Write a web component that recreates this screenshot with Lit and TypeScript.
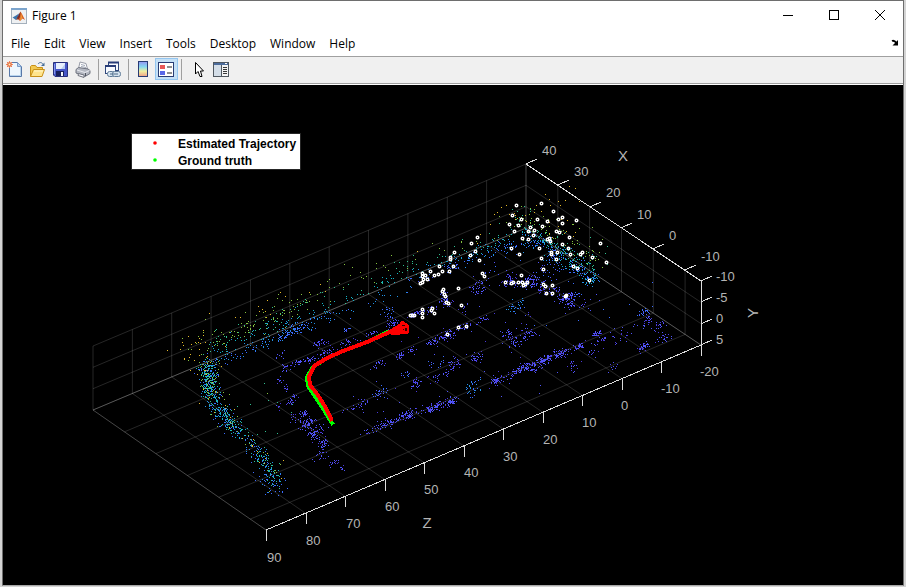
import { LitElement, html, svg, css } from "lit";
import { customElement } from "lit/decorators.js";

type Pt = [number, number];

/* Colour ramp of the point cloud, low to high elevation */
const RAMP = ["#4a38d8", "#5054f8", "#3b6dff", "#2292e6", "#14b4c8", "#30c090", "#86c440", "#e6bb2a"];

/* Seeded generator, so the cloud is the same on every load */
function randomSource(seed: number) {
  let s = seed;
  return () => {
    s = (s + 0x6d2b79f5) | 0;
    let t = Math.imul(s ^ (s >>> 15), 1 | s);
    t = (t + Math.imul(t ^ (t >>> 7), 61 | t)) ^ t;
    return ((t ^ (t >>> 14)) >>> 0) / 4294967296;
  };
}

/* [x, y, count, spread x, spread y, ramp indices] */
type Cluster = [number, number, number, number, number, number[]];
const LOW = [0, 1, 1];
const MID = [1, 2, 2];
const SKY = [2, 3];
const CLUSTERS: Cluster[] = [
  [508, 280, 45, 6, 4, LOW], [524, 282, 60, 7, 4, LOW], [534, 283, 16, 4, 4, LOW], [542, 287, 36, 3, 4, LOW],
  [553, 291, 20, 5, 3, LOW], [566, 297, 70, 6, 3, LOW], [570, 304, 30, 3, 3, LOW], [576, 294, 10, 4, 2, MID],
  [479, 287, 42, 6, 5, LOW], [517, 305, 34, 7, 4, SKY], [508, 333, 26, 5, 4, LOW], [529, 334, 36, 6, 4, LOW],
  [514, 343, 32, 4, 5, LOW], [597, 333, 34, 3, 2, LOW], [602, 338, 16, 5, 3, LOW], [527, 315, 5, 9, 5, LOW],
  [325, 352, 26, 5, 3, LOW], [320, 343, 22, 5, 3, LOW], [388, 312, 22, 5, 4, MID], [393, 323, 34, 4, 3, LOW],
  [371, 333, 16, 4, 2, LOW], [346, 343, 26, 9, 3, LOW], [307, 360, 14, 5, 2, LOW], [400, 355, 24, 3, 2, LOW],
  [410, 350, 16, 4, 3, LOW], [378, 363, 24, 5, 3, LOW], [432, 342, 28, 4, 2, LOW], [446, 335, 50, 6, 4, LOW],
  [463, 326, 28, 5, 2, LOW], [483, 318, 14, 5, 3, LOW], [477, 357, 32, 5, 4, LOW], [453, 363, 30, 5, 5, LOW],
  [447, 372, 20, 5, 3, LOW], [434, 377, 14, 5, 3, LOW], [435, 362, 14, 8, 5, MID], [415, 383, 30, 3, 4, LOW],
  [405, 375, 10, 5, 3, MID], [380, 392, 26, 5, 4, MID], [360, 404, 18, 7, 3, LOW], [473, 387, 34, 5, 5, SKY],
  [497, 380, 50, 5, 3, LOW], [514, 372, 28, 5, 3, LOW], [526, 366, 70, 7, 3, LOW], [545, 359, 80, 5, 3, LOW],
  [561, 353, 60, 5, 3, LOW], [536, 368, 22, 5, 3, LOW], [573, 365, 16, 4, 5, LOW], [580, 345, 30, 4, 2, LOW],
  [593, 350, 16, 4, 5, LOW], [612, 367, 9, 4, 3, LOW], [617, 337, 10, 7, 5, LOW], [643, 312, 24, 5, 3, MID],
  [648, 320, 22, 4, 3, LOW], [658, 326, 24, 4, 3, LOW], [665, 337, 14, 4, 3, LOW], [643, 346, 36, 4, 3, LOW],
  [660, 340, 8, 6, 3, LOW], [630, 328, 10, 8, 5, LOW], [450, 401, 50, 5, 3, LOW], [433, 407, 80, 7, 3, LOW],
  [407, 415, 80, 7, 3, LOW], [385, 424, 50, 8, 3, LOW], [369, 431, 14, 5, 2, LOW], [350, 409, 9, 4, 4, LOW],
  [303, 413, 28, 3, 2, LOW], [307, 423, 60, 5, 4, LOW], [315, 433, 66, 5, 4, LOW], [323, 442, 40, 4, 4, LOW],
  [320, 456, 18, 6, 4, LOW], [334, 462, 14, 4, 3, LOW], [343, 468, 7, 2, 3, LOW], [290, 402, 12, 4, 2, LOW],
  [278, 356, 9, 4, 3, LOW], [284, 367, 16, 4, 3, LOW], [297, 362, 22, 5, 2, LOW], [310, 359, 14, 5, 2, LOW],
  [280, 380, 9, 3, 3, LOW], [285, 387, 9, 3, 3, LOW], [293, 398, 14, 3, 3, LOW], [280, 405, 7, 4, 4, LOW],
  [292, 418, 12, 4, 4, LOW], [317, 343, 8, 2, 2, LOW], [297, 327, 28, 5, 4, [2]], [283, 335, 18, 6, 3, [2]],
  [345, 330, 11, 3, 2, MID], [415, 313, 24, 6, 2, LOW], [430, 309, 16, 6, 3, LOW], [443, 296, 22, 3, 6, LOW],
  [447, 303, 22, 4, 3, LOW], [462, 310, 12, 6, 5, LOW], [452, 267, 22, 5, 4, MID], [425, 277, 12, 6, 4, MID],
  [470, 258, 20, 4, 4, [2, 2, 3]], [494, 249, 22, 8, 4, [2, 3]], [510, 247, 26, 9, 4, [2, 3]],
  [532, 244, 30, 10, 5, [2, 3]], [555, 256, 40, 8, 7, [2, 2, 3]], [575, 268, 36, 7, 7, [2, 2, 3]],
  [545, 272, 44, 14, 8, [1, 2]], [590, 280, 34, 5, 5, [2, 3, 4]], [500, 265, 18, 14, 8, [1, 2]],
  [602, 350, 12, 30, 10, LOW], [560, 320, 10, 50, 12, MID], [470, 340, 16, 50, 20, LOW],
  [420, 390, 18, 50, 16, LOW], [530, 370, 10, 40, 14, LOW], [590, 302, 12, 8, 6, LOW],
  [210, 375, 50, 7, 14, [5, 6, 6, 7]], [190, 350, 22, 18, 18, [6, 7, 7]], [275, 410, 9, 20, 30, [5, 6]],
  [560, 205, 12, 18, 16, [7]], [535, 215, 14, 15, 16, [7, 7, 6]], [575, 230, 14, 14, 14, [7, 6]],
];

/* Walls: path, count, offset y, spread x, spread y, ramp indices */
type Band = [Pt[], number, number, number, number, number[]];
const CURVE: Pt[] = [[206, 362], [208, 378], [211, 392], [218, 408], [230, 424], [246, 438], [260, 453], [271, 470], [275, 486]];
const BANDS: Band[] = [
  [CURVE, 230, 2, 8, 5, [2, 2, 3]],
  [CURVE, 200, 0, 6, 5, [4, 4, 5, 3]],
  [CURVE, 80, -3, 8, 7, [6, 5]],
  [CURVE, 26, -2, 9, 6, [7]],
  [[[206, 365], [210, 395]], 110, 0, 5, 6, [2, 3, 4, 5]],
  [[[214, 405], [240, 432]], 70, 0, 6, 4, [2, 3, 4]],
  [[[264, 478], [280, 494]], 24, 0, 8, 4, [2]],
  [[[203, 364], [300, 325]], 80, 4, 4, 4, [2, 2, 3]],
  [[[260, 342], [330, 312]], 70, 2, 5, 4, [2, 3]],
  [[[205, 355], [300, 318]], 90, -2, 4, 7, [4, 5, 3]],
  [[[205, 350], [310, 305]], 95, -4, 5, 7, [5, 6, 6]],
  [[[180, 350], [300, 295]], 34, -2, 8, 10, [7, 6]],
  [[[300, 325], [420, 276]], 40, 5, 4, 4, [2, 3]],
  [[[300, 320], [420, 270]], 44, -2, 4, 4, [4, 4, 5]],
  [[[300, 308], [420, 258]], 32, -4, 5, 5, [5, 6]],
  [[[300, 290], [460, 235]], 14, 0, 6, 8, [6, 7]],
  [[[410, 275], [526, 230]], 60, 0, 4, 4, [3, 4, 4]],
  [[[400, 280], [526, 230]], 40, -9, 5, 6, [5, 6, 5]],
  [[[460, 245], [526, 215]], 14, -10, 6, 8, [7, 6]],
  [[[522, 226], [595, 276]], 130, 4, 5, 5, [3, 4, 2]],
  [[[522, 226], [590, 270]], 110, -3, 6, 6, [4, 5, 5]],
  [[[515, 215], [605, 262]], 80, -3, 7, 8, [6, 5, 6]],
];

function buildCloud(): string[] {
  const rnd = randomSource(90210);
  const bell = () => (rnd() + rnd() + rnd() - 1.5) * 1.5;
  const paths = RAMP.map(() => "");
  const dot = (x: number, y: number, ramp: number[]) => {
    const c = ramp[Math.floor(rnd() * ramp.length)];
    paths[c] += `M${Math.round(x)} ${Math.round(y)}h1v1h-1z`;
  };
  for (const [x, y, n, sx, sy, ramp] of CLUSTERS) {
    for (let i = 0; i < n; i++) {
      const u = bell() * sx;
      dot(x + u, y + bell() * sy - u * 0.3, ramp);
    }
  }
  for (const [pts, n, dy, sx, sy, ramp] of BANDS) {
    for (let i = 0; i < n; i++) {
      const t = rnd() * (pts.length - 1);
      const k = Math.floor(t);
      const f = t - k;
      const [a, b] = [pts[k], pts[k + 1]];
      dot(a[0] + (b[0] - a[0]) * f + bell() * sx, a[1] + (b[1] - a[1]) * f + dy + bell() * sy, ramp);
    }
  }
  return paths;
}
const CLOUD = buildCloud();

/* Map points seen by the current key frame */
const TRACKED: Pt[] = [
  [516, 205], [541, 203], [553, 211], [512, 215], [521, 219], [537, 219], [509, 224], [547, 221], [558, 219],
  [562, 217], [562, 223], [576, 220], [542, 226], [518, 225], [514, 231], [530, 227], [528, 231], [534, 230],
  [533, 235], [522, 238], [528, 239], [556, 231], [559, 232], [569, 237], [547, 239], [550, 241], [549, 238],
  [562, 244], [568, 248], [511, 248], [519, 254], [539, 248], [541, 258], [551, 252], [551, 254], [557, 252],
  [556, 259], [570, 254], [582, 252], [580, 254], [592, 257], [600, 243], [606, 262], [543, 269], [573, 266],
  [577, 268], [589, 280], [477, 237], [471, 243], [475, 251], [470, 255], [479, 260], [454, 252], [450, 257],
  [450, 259], [453, 266], [439, 266], [449, 271], [442, 271], [430, 271], [422, 273], [422, 276], [425, 275],
  [427, 279], [423, 279], [420, 283], [422, 282], [434, 275], [438, 274], [482, 273], [484, 276], [458, 288],
  [443, 289], [442, 291], [444, 294], [445, 296], [446, 302], [448, 303], [461, 305], [521, 275], [505, 282],
  [511, 283], [513, 282], [518, 282], [522, 282], [523, 285], [527, 282], [525, 284], [543, 284], [545, 286],
  [552, 285], [546, 293], [552, 293], [566, 295], [565, 296], [432, 308], [431, 310], [434, 313], [422, 309],
  [422, 313], [422, 317], [410, 315], [412, 315], [414, 315], [458, 327], [466, 326], [447, 334],
];

/* Axes box: corner points, 10-unit steps and tick labels */
const FRONT: Pt = [266, 530];
const RIGHT: Pt = [701, 345];
const BACK: Pt = [526, 228];
const LEFT: Pt = [93, 410];
const WALL = 64;
const Z_TICKS = ["90", "80", "70", "60", "50", "40", "30", "20", "10", "0", "-10", "-20"];
const X_TICKS = ["40", "30", "20", "10", "0", "-10"];
const Y_TICKS = ["-10", "-5", "0", "5"];
const mix = (a: Pt, b: Pt, t: number): Pt => [a[0] + (b[0] - a[0]) * t, a[1] + (b[1] - a[1]) * t];

function gridPath(): string {
  let d = "";
  const seg = (a: Pt, b: Pt) => { d += `M${a[0].toFixed(1)} ${a[1].toFixed(1)}L${b[0].toFixed(1)} ${b[1].toFixed(1)}`; };
  const up = (p: Pt, h: number): Pt => [p[0], p[1] - h];
  Z_TICKS.forEach((_, i) => {
    const back = mix(LEFT, BACK, i / 11);
    seg(mix(FRONT, RIGHT, i / 11), back);
    seg(back, up(back, WALL));
  });
  X_TICKS.forEach((_, i) => {
    const side = mix(BACK, RIGHT, i / 5.5);
    seg(mix(LEFT, FRONT, i / 5.5), side);
    seg(side, up(side, WALL));
  });
  Y_TICKS.forEach((_, i) => {
    const h = (WALL * i) / 3;
    seg(up(LEFT, h), up(BACK, h));
    seg(up(BACK, h), up(RIGHT, h));
  });
  return d + `M${LEFT}L${FRONT}`;
}

function axisPath(): string {
  let d = `M${FRONT}L${RIGHT}V281L526 164`;
  Z_TICKS.forEach((_, i) => {
    const [x, y] = mix(FRONT, RIGHT, i / 11);
    d += `M${Math.round(x)} ${Math.round(y)}v11`;
  });
  X_TICKS.forEach((_, i) => {
    const [x, y] = mix([526, 164], [701, 281], i / 5.5);
    d += `M${Math.round(x)} ${Math.round(y)}l11 -5`;
  });
  Y_TICKS.forEach((_, i) => { d += `M701 ${281 + Math.round((64 * i) / 3)}l11 -5`; });
  return d;
}
const GRID = gridPath();
const AXES = axisPath();

@customElement("trajectory-plot")
export class TrajectoryPlot extends LitElement {
  static styles = css`
    :host { display: flex; flex: 1; min-height: 0; background: #000; }
    .plot { flex: 1; min-width: 0; width: 100%; height: 100%; font-family: "Liberation Sans", Arial, sans-serif; }
    .grid { fill: none; stroke: #fff; stroke-opacity: 0.15; }
    .edge { fill: none; stroke: #fff; stroke-opacity: 0.1; }
    .axes { fill: none; stroke: #dcdcdc; shape-rendering: crispEdges; }
    .dots { shape-rendering: crispEdges; }
    .ring { fill: none; stroke: #fff; stroke-width: 1.4px; }
    .tick { fill: #b4b4b4; font-size: 13px; }
    .name { fill: #b4b4b4; font-size: 15px; text-anchor: middle; }
    .truth { fill: none; stroke: #0f0; stroke-width: 4px; shape-rendering: crispEdges; stroke-linecap: square; }
    .estimate { fill: none; stroke: #f00; stroke-width: 4px; shape-rendering: crispEdges; }
    .camera { fill: #f00; stroke: #f00; shape-rendering: crispEdges; }
    .hole { fill: #300; shape-rendering: crispEdges; }
    .box { fill: #fff; stroke: #262626; }
    .key { font-size: 12px; font-weight: bold; fill: #000; }
    .red { fill: #f00; }
    .green { fill: #0f0; }
  `;

  render() {
    return html`
      <svg class="plot" viewBox="3 85 900 500" role="img" aria-label="Estimated trajectory and map points">
        <path class="grid" d=${GRID} />
        <path class="edge" d="M93 410L526 228L701 345" />
        <g class="dots">${CLOUD.map((d, i) => svg`<path d=${d} fill=${RAMP[i]} />`)}</g>
        <g>${TRACKED.map(([x, y]) => svg`<circle class="ring" cx=${x + 0.5} cy=${y + 0.5} r="1.3" />`)}</g>
        <path class="axes" d=${AXES} />
        ${Z_TICKS.map((t, i) => {
          const [x, y] = mix([267, 562], [700, 376], i / 11);
          return svg`<text class="tick" x=${Math.round(x)} y=${Math.round(y)}>${t}</text>`;
        })}
        ${X_TICKS.map((t, i) => {
          const [x, y] = mix([542, 155], [701, 261], i / 5);
          return svg`<text class="tick" x=${Math.round(x)} y=${Math.round(y)}>${t}</text>`;
        })}
        ${Y_TICKS.map((t, i) => svg`<text class="tick" x="716" y=${281 + i * 21}>${t}</text>`)}
        <text class="name" x="623" y="161">X</text>
        <text class="name" x="427" y="528">Z</text>
        <text class="name" transform="translate(758 313) rotate(-90)">Y</text>
        <path class="truth" d="M332 423L324 410L314 395L308 386L307 377L313 367L327 358L343 351L367 342L388 332" />
        <path class="estimate" d="M332 421L326 408L317 394L310 385L309 377L314 366L327 358L343 351L367 342L392 331" />
        <path class="camera" d="M390 330L397 326L400 324L402 321L405 323L408 325V333L406 334L403 333L396 335L391 334z" />
        <path class="hole" d="M402 325h3v1h-3zM405 328h2v3h-2zM403 329h1v1h-1z" />
        <rect class="box" x="131.5" y="133.5" width="169" height="36" />
        <circle class="red" cx="155" cy="143" r="1.8" />
        <circle class="green" cx="155" cy="160" r="1.8" />
        <text class="key" x="178" y="148">Estimated Trajectory</text>
        <text class="key" x="178" y="165">Ground truth</text>
      </svg>
    `;
  }
}

const ICONS = {
  fresh: svg`
    <path d="M3.500 3.500V15.500H15.500V5.500L11.500 1.500H5.500" fill="#eef6fd" stroke="#5878a8" />
    <path d="M14.500 5.500V14.500H4" fill="none" stroke="#b8d4ee" />
    <path d="M11.500 1.500V5.500H15.500z" fill="#b4d2f0" stroke="#7c9cc8" />
    <path d="M3.500 0V7M0 3.500H7M1 1L6 6M6 1L1 6" stroke="#f08a60" /><rect x="2" y="2" width="3" height="3" fill="#fff0c0" stroke="#e05a28" />`,
  open: svg`
    <path d="M1.500 15.500V5.500L2.500 4.500H6.500L8 6.500H13.500V9" fill="#f2c850" stroke="#c89018" />
    <path d="M1.500 15.500L4.500 8.500H15.500L13 15.500z" fill="#ffe48c" stroke="#c89018" />
    <path d="M5 10H14" stroke="#fff6cc" /><path d="M9 3C10.500 1 13 1 14 3.500" fill="none" stroke="#48709c" /><path d="M15.500 1.500V5H12z" fill="#48709c" />`,
  save: svg`
    <path d="M1.500 1.500H15.500V15.500H3L1.500 14z" fill="#4656c8" stroke="#28307c" />
    <rect x="4" y="2" width="9" height="6" fill="#e8f0fc" /><path d="M9 8L13 3V8z" fill="#b8ccf0" />
    <rect x="4" y="10" width="8" height="5" fill="#18205c" /><rect x="9" y="11" width="2" height="4" fill="#f4f8ff" />
    <path d="M2.500 3V13" stroke="#8498ec" />`,
  print: svg`
    <path d="M3.500 7.500L5 1L11 2.500L12.500 8z" fill="#fff" stroke="#989ca8" /><path d="M6 3.500L10 4.500M6 5.500L11 6.500" stroke="#a0a8b8" />
    <path d="M1 8.500L3.500 6.500L13 8L15 9.500V12.500L10 15.500L1 12z" fill="#b4b8c2" stroke="#707480" />
    <path d="M2 9L10 11.500L14.500 9.500" fill="none" stroke="#e8eaf0" /><path d="M3.500 12.500L9 14V16.500L3 14.500z" fill="#f4f4f8" stroke="#6c707c" /><path d="M10.500 12V15" stroke="#505460" />`,
  link: svg`
    <rect x="3.500" y="1.500" width="10" height="8" fill="#f8faff" stroke="#30487c" /><path d="M3 1.500H14" stroke="#283c78" stroke-width="2" />
    <rect x="0.500" y="4.500" width="10" height="8" fill="#f8faff" stroke="#30487c" /><path d="M0 5H11" stroke="#283c78" stroke-width="2" />
    <rect x="2.500" y="10.500" width="7" height="5" rx="2" fill="#d4e2ee" stroke="#607c98" /><rect x="7.500" y="10.500" width="8" height="5" rx="2" fill="#d4e2ee" stroke="#607c98" /><path d="M5 13H13" stroke="#506c88" />`,
  pointer: svg`<path d="M5.500 1.500V13L8 10.500L10 15.500H12L10.500 10H13.500z" fill="#fff" stroke="#000" />`,
  panel: svg`
    <rect x="0.500" y="1.500" width="15" height="14" fill="#f4f4f4" stroke="#505860" /><rect x="1" y="2" width="14" height="2" fill="#4c6c9c" />
    <rect x="12" y="2" width="2" height="1" fill="#fff" /><rect x="1" y="4" width="7" height="11" fill="#d4dee8" /><path d="M8.500 4V15" stroke="#505860" />
    <path d="M10 6.500H14M10 8.500H14M10 10.500H14M10 12.500H14" stroke="#383838" />`,
  legend: svg`
    <rect x="0.500" y="1.500" width="15" height="14" fill="#fff" stroke="#283c74" /><path d="M0 1.500H16" stroke="#283c74" />
    <rect x="2" y="4" width="5" height="4" fill="#e85858" /><rect x="2" y="10" width="5" height="4" fill="#5868e8" />
    <path d="M9 6H14M9 12H14" stroke="#202020" />`,
  colorbar: svg`
    <defs><linearGradient id="ramp" x1="0" y1="0" x2="0" y2="1"><stop offset="0" stop-color="#9494f0" /><stop offset="0.350" stop-color="#84d8f0" /><stop offset="0.650" stop-color="#f0f0a0" /><stop offset="1" stop-color="#f0a088" /></linearGradient></defs>
    <rect x="3.500" y="0.500" width="9" height="15" fill="url(#ramp)" stroke="#283c74" />`,
};

const TOOLS: Array<[keyof typeof ICONS, string] | null> = [
  ["fresh", "New Figure"], ["open", "Open File"], ["save", "Save Figure"], ["print", "Print Figure"], null,
  ["link", "Link Plot"], null,
  ["colorbar", "Insert Colorbar"], ["legend", "Insert Legend"], null,
  ["pointer", "Edit Plot"], ["panel", "Open Property Inspector"],
];

@customElement("app-root")
export class AppRoot extends LitElement {
  static styles = css`
    :host {
      display: flex; flex-direction: column; box-sizing: border-box; height: 100vh; padding: 0 2px 1px;
      background: #d4d4d4; font-family: "Open Sans", "Noto Sans", sans-serif; font-size: 12px; color: #000;
    }
    button { font: inherit; color: inherit; background: none; border: 0; padding: 0; margin: 0; }
    .window {
      flex: 1; min-height: 0; display: flex; flex-direction: column; background: #fff;
      border: 1px solid #6e6e6e; border-bottom-color: #a8a8a8;
    }
    .title { display: flex; align-items: center; height: 29px; padding-left: 8px; }
    .logo { width: 16px; height: 16px; margin-right: 5px; }
    .caption { flex: 1; font-size: 12px; font-weight: normal; margin: 0; line-height: 16px; }
    .sys { width: 46px; height: 29px; display: grid; place-items: center; }
    .sys svg { width: 12px; height: 12px; fill: none; stroke: #000; }
    .menu { display: flex; align-items: center; height: 26px; padding: 0 4px 0 1px; }
    .entry { padding: 2px 7px 0; line-height: 16px; }
    .dock { margin-left: auto; width: 8px; height: 8px; display: flex; }
    .tools {
      display: flex; align-items: flex-start; box-sizing: border-box; height: 28px; padding-top: 1px;
      background: #f0f0f0; border-top: 1px solid #a0a0a0; border-bottom: 1px solid #a0a0a0; margin-bottom: 1px;
    }
    .tool { box-sizing: border-box; width: 23px; height: 22px; display: grid; place-items: center; }
    .tool.on { background: #c4e0f6; border: 1px solid #94c6f0; }
    .tool svg { width: 17px; height: 17px; }
    .sep { width: 1px; height: 21px; margin: 1px 3px 0; background: #a0a0a0; }
    .sep:last-of-type { margin-right: 5px; }
  `;

  render() {
    return html`
      <main class="window">
        <header class="title">
          <svg class="logo" viewBox="0 0 16 16" aria-hidden="true">
            <rect x="0.5" y="0.5" width="15" height="15" fill="#eef0f2" stroke="#a4b0bc" /><rect x="0" y="0" width="16" height="2" fill="#7ca4cc" />
            <path d="M1.500 9.500L5 7.500L8 5.500L7 11L5 12z" fill="#3c74ac" />
            <path d="M5 12L7.500 8L9.500 3.500L11 6L14 12L11.500 10.500L9 13L7 11z" fill="#d85c20" /><path d="M6 10L9.500 3.500L9 9L7 12z" fill="#7c2c28" />
            <path d="M10 5L11.500 10L9 13z" fill="#f09838" />
          </svg>
          <h1 class="caption">Figure 1</h1>
          <button class="sys" aria-label="Minimize"><svg viewBox="0 0 12 12"><path d="M1 5.500H11" /></svg></button>
          <button class="sys" aria-label="Maximize"><svg viewBox="0 0 12 12"><rect x="1.500" y="0.500" width="9" height="9" /></svg></button>
          <button class="sys" aria-label="Close"><svg viewBox="0 0 12 12"><path d="M1 0L11 10M11 0L1 10" /></svg></button>
        </header>
        <nav class="menu">
          ${["File", "Edit", "View", "Insert", "Tools", "Desktop", "Window", "Help"].map((m) => html`<button class="entry">${m}</button>`)}
          <button class="dock" aria-label="Dock Figure">
            <svg viewBox="0 0 8 8" width="8" height="8"><path d="M1 2C3 1 4 2 5.500 4" fill="none" stroke="#000" stroke-width="1.800" /><path d="M7 1V6.500H1.500z" fill="#000" /></svg>
          </button>
        </nav>
        <div class="tools" role="toolbar" aria-label="Figure toolbar">
          ${TOOLS.map((t) =>
            t
              ? html`<button class="tool ${t[0] === "legend" ? "on" : ""}" aria-label=${t[1]}><svg viewBox="0 0 17 17">${ICONS[t[0]]}</svg></button>`
              : html`<span class="sep"></span>`
          )}
        </div>
        <trajectory-plot></trajectory-plot>
      </main>
    `;
  }
}
